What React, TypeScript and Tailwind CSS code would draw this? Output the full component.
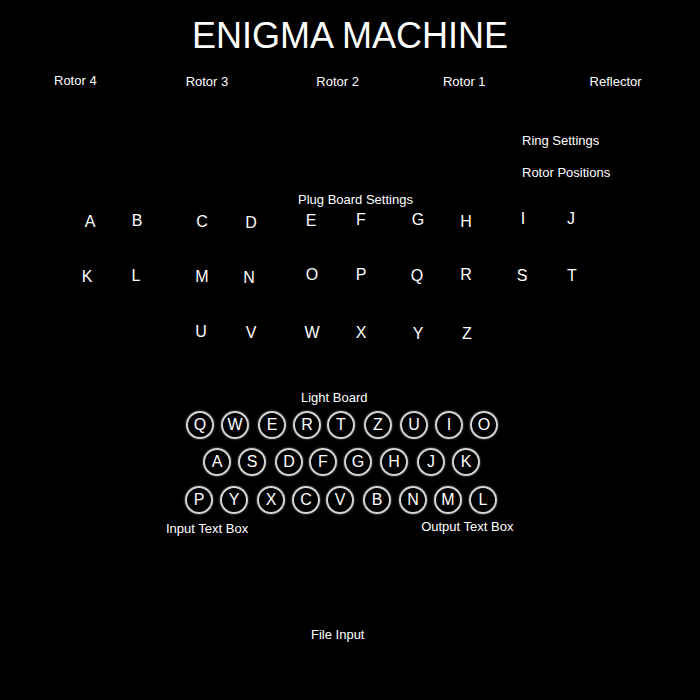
import React from "react";

const plugRow1: [string, string][] = [
  ["A", "ml-[80px] mt-[3px]"],
  ["B", "ml-[27px] mt-[2px]"],
  ["C", "ml-[45px] mt-[3px]"],
  ["D", "ml-[29px] mt-[4px]"],
  ["E", "ml-[40px] mt-[2px]"],
  ["F", "ml-[30px] mt-[1px]"],
  ["G", "ml-[37px] mt-[1px]"],
  ["H", "ml-[28px] mt-[3px]"],
  ["I", "ml-[37px] mt-0"],
  ["J", "ml-[28px] mt-0"],
];

const plugRow2: [string, string][] = [
  ["K", "ml-[77px] mt-[2px]"],
  ["L", "ml-[29px] mt-[1px]"],
  ["M", "ml-[46px] mt-[2px]"],
  ["N", "ml-[27px] mt-[3px]"],
  ["O", "ml-[43px] mt-0"],
  ["P", "ml-[29px] mt-0"],
  ["Q", "ml-[36px] mt-[1px]"],
  ["R", "ml-[29px] mt-0"],
  ["S", "ml-[36px] mt-[1px]"],
  ["T", "ml-[30px] mt-[1px]"],
];

const plugRow3: [string, string][] = [
  ["U", "ml-[191px] mt-0"],
  ["V", "ml-[30px] mt-[1px]"],
  ["W", "ml-[41px] mt-[1px]"],
  ["X", "ml-[29px] mt-[1px]"],
  ["Y", "ml-[37px] mt-[2px]"],
  ["Z", "ml-[29px] mt-[2px]"],
];

const lightRow1: [string, string][] = [
  ["Q", "ml-[186px]"],
  ["W", "ml-[7px]"],
  ["E", "ml-[9px]"],
  ["R", "ml-[7px]"],
  ["T", "ml-[6px]"],
  ["Z", "ml-[9px]"],
  ["U", "ml-[8px]"],
  ["I", "ml-[7px]"],
  ["O", "ml-[7px]"],
];

const lightRow2: [string, string][] = [
  ["A", "ml-[203px]"],
  ["S", "ml-[7px]"],
  ["D", "ml-[9px]"],
  ["F", "ml-[6px]"],
  ["G", "ml-[7px]"],
  ["H", "ml-[8px]"],
  ["J", "ml-[9px]"],
  ["K", "ml-[7px]"],
];

const lightRow3: [string, string][] = [
  ["P", "ml-[185px]"],
  ["Y", "ml-[7px]"],
  ["X", "ml-[9px]"],
  ["C", "ml-[7px]"],
  ["V", "ml-[6px]"],
  ["B", "ml-[9px]"],
  ["N", "ml-[8px]"],
  ["M", "ml-[7px]"],
  ["L", "ml-[7px]"],
];

function PlugRow({ items, cls }: { items: [string, string][]; cls: string }) {
  return (
    <div className={`flex items-start h-[20px] ${cls}`}>
      {items.map(([l, c]) => (
        <span key={l} className={`w-[20px] text-center text-[16px] leading-none ${c}`}>
          {l}
        </span>
      ))}
    </div>
  );
}

function LightRow({ items, cls }: { items: [string, string][]; cls: string }) {
  return (
    <div className={`flex items-start ${cls}`}>
      {items.map(([l, c]) => (
        <div
          key={l}
          className={`w-[28px] h-[28px] shrink-0 rounded-full border-2 border-[#d4d4d4] shadow-[0_0_2px_#9a9a9a] flex items-center justify-center text-[16px] leading-none ${c}`}
        >
          {l}
        </div>
      ))}
    </div>
  );
}

export default function App() {
  return (
    <div
      className="w-[700px] h-[700px] bg-black text-white overflow-hidden flex flex-col"
      style={{ fontFamily: '"Liberation Sans", Arial, sans-serif' }}
    >
      <h1 className="mt-[18px] text-center text-[36px] leading-none font-normal">ENIGMA MACHINE</h1>

      <div className="mt-[20px] flex items-start text-[13px] leading-none">
        <span className="ml-[54px]">Rotor 4</span>
        <span className="ml-[89px] mt-[1px]">Rotor 3</span>
        <span className="ml-[88px] mt-[1px]">Rotor 2</span>
        <span className="ml-[84px] mt-[1px]">Rotor 1</span>
        <span className="ml-[104px] mt-[1px]">Reflector</span>
      </div>

      <div className="ml-[522px] mt-[46px] flex flex-col items-start text-[13px] leading-none">
        <span>Ring Settings</span>
        <span className="mt-[19px]">Rotor Positions</span>
      </div>

      <div className="ml-[298px] mt-[14px] text-[13px] leading-none">Plug Board Settings</div>

      <PlugRow items={plugRow1} cls="mt-[5px]" />
      <PlugRow items={plugRow2} cls="mt-[36px]" />
      <PlugRow items={plugRow3} cls="mt-[37px]" />

      <div className="ml-[301px] mt-[47px] text-[13px] leading-none">Light Board</div>

      <LightRow items={lightRow1} cls="mt-[7px]" />
      <LightRow items={lightRow2} cls="mt-[9px]" />
      <LightRow items={lightRow3} cls="mt-[10px]" />

      <div className="mt-[6px] flex items-start text-[13px] leading-none">
        <span className="ml-[166px] mt-[2px]">Input Text Box</span>
        <span className="ml-[173px]">Output Text Box</span>
      </div>

      <div className="ml-[311px] mt-[93px] text-[13px] leading-none">File Input</div>
    </div>
  );
}
